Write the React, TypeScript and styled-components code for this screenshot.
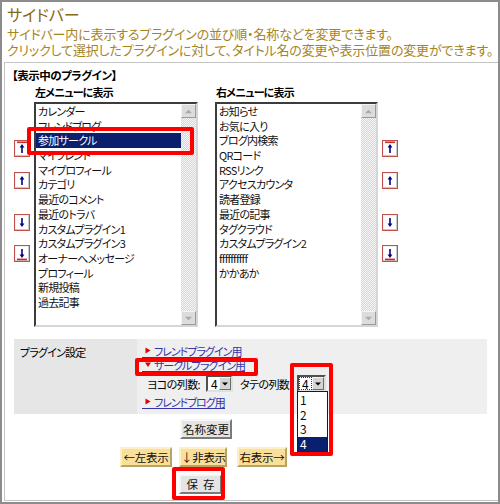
import styled, { createGlobalStyle } from 'styled-components';

const GlobalStyle = createGlobalStyle`
  html, body {
    margin: 0;
    padding: 0;
    background: #fff;
  }
  body {
    font-family: "Noto Sans CJK JP", "Noto Sans", sans-serif;
    font-feature-settings: "palt";
    color: #000;
  }
`;

type Pos = { $x: number; $y: number; $w: number; $h: number };

const Frame = styled.div`
  position: relative;
  width: 500px;
  height: 504px;
  box-sizing: border-box;
  border: 2px solid #8c8c8c;
  padding: 0 0 1px 2px;
  display: flex;
  flex-direction: column;
  overflow: hidden;
`;

const Title = styled.h1`
  margin: 1px 0 0;
  padding-left: 3px;
  font-size: 16px;
  font-weight: normal;
  line-height: 23px;
  color: #866914;
`;

const Description = styled.p`
  margin: 0;
  padding-left: 3px;
  font-size: 13px;
  line-height: 16px;
  letter-spacing: -0.15px;
  color: #a6841e;
  white-space: nowrap;
`;

const Panel = styled.div`
  flex: 1;
  margin-top: 4px;
  border: 1px solid #c4c4c4;
  border-right: none;
  padding: 5px 0 0 7px;
`;

const Heading = styled.div`
  font-size: 11.5px;
  font-weight: bold;
  line-height: 14px;
  letter-spacing: -0.5px;
`;

const ListsRow = styled.div`
  display: flex;
  padding-left: 2px;
`;

const ArrowCol = styled.div<{ $ml: number }>`
  display: flex;
  flex-direction: column;
  width: 16px;
  padding-top: 58px;
  margin-left: ${p => p.$ml}px;
`;

const ArrowBox = styled.span<{ $mt: number }>`
  display: block;
  width: 16px;
  height: 17px;
  box-sizing: border-box;
  margin-top: ${p => p.$mt}px;
  border: 1px solid #c0504d;
  background: #fff;
  box-shadow: inset -1px -1px 0 #c8c8c8, inset 1px 1px 0 #f2f2f2;

  svg {
    display: block;
  }
`;

const ListColumn = styled.div<{ $ml: number; $w: number }>`
  display: flex;
  flex-direction: column;
  margin-left: ${p => p.$ml}px;
  width: ${p => p.$w}px;
`;

const ColumnLabel = styled.div`
  margin-top: 2px;
  padding-left: 1px;
  font-size: 11px;
  font-weight: bold;
  line-height: 16px;
  letter-spacing: -0.8px;
`;

const ListBox = styled.div`
  margin-top: 2px;
  height: 225px;
  box-sizing: border-box;
  border: 2px solid;
  border-color: #3c3c3c #d6d6d6 #d6d6d6 #3c3c3c;
  background: #fff;
  display: flex;
`;

const Items = styled.div`
  flex: 1;
  min-width: 0;
`;

const Item = styled.div<{ $selected?: boolean }>`
  height: 14.7px;
  line-height: 14.7px;
  padding-left: 2px;
  font-size: 11px;
  letter-spacing: -0.75px;
  white-space: nowrap;
  background: ${p => (p.$selected ? '#0a1f6e' : 'transparent')};
  color: ${p => (p.$selected ? '#fff' : '#111')};
`;

const ScrollBar = styled.div`
  width: 15px;
  display: flex;
  flex-direction: column;
  justify-content: space-between;
  background: repeating-conic-gradient(#f6f6f6 0 25%, #d6d6d6 0 50%) 0 0 / 2px 2px;
`;

const ScrollBtn = styled.div`
  height: 14px;
  box-sizing: border-box;
  background: #dcdcdc;
  border: 1px solid;
  border-color: #f4f4f4 #9a9a9a #9a9a9a #f4f4f4;
  display: flex;
  align-items: center;
  justify-content: center;
`;

const Settings = styled.div`
  display: flex;
  margin: 12px 11px 0 2px;
`;

const SettingsLabel = styled.div`
  width: 123px;
  box-sizing: border-box;
  padding: 6px 6px;
  background: #e6e6e6;
  font-size: 11px;
  letter-spacing: -0.8px;
  line-height: 14px;
`;

const SettingsBody = styled.div`
  flex: 1;
  background: #efefef;
  padding: 5px 0 5px 5px;
`;

const LinkLine = styled.div<{ $mt?: number }>`
  height: 14px;
  margin-top: ${p => p.$mt ?? 0}px;
  display: flex;
  align-items: center;
`;

const Link = styled.a`
  display: inline-flex;
  align-items: center;
  gap: 3px;
  padding-left: 3px;
  height: 12px;
  border-bottom: 1px solid #3333aa;
  font-size: 11px;
  letter-spacing: -1px;
  line-height: 12px;
  color: #3333aa;
  text-decoration: none;
  cursor: pointer;
`;

const SelectRow = styled.div`
  display: flex;
  align-items: center;
  margin-top: 3px;
  height: 17px;
  padding-left: 5px;
  font-size: 11px;
  letter-spacing: -0.6px;
`;

const FieldLabel = styled.span<{ $w: number; $pl?: number }>`
  width: ${p => p.$w}px;
  padding-left: ${p => p.$pl ?? 0}px;
  white-space: nowrap;
`;

const Select = styled.div<{ $w: number }>`
  position: relative;
  width: ${p => p.$w}px;
  height: 17px;
  box-sizing: border-box;
  border: 2px solid;
  border-color: #505050 #e0e0e0 #e0e0e0 #505050;
  background: #fff;
  display: flex;
`;

const SelectValue = styled.div<{ $focus?: boolean }>`
  flex: 1;
  margin: 1px;
  padding-left: 2px;
  font-size: 12px;
  line-height: 11px;
  letter-spacing: 0;
  outline: ${p => (p.$focus ? '1px dotted #333' : 'none')};
`;

const SelectArrow = styled.div`
  width: 12px;
  box-sizing: border-box;
  background: #d4d4d4;
  border: 1px solid;
  border-color: #f4f4f4 #6c6c6c #6c6c6c #f4f4f4;
  display: flex;
  align-items: center;
  justify-content: center;
`;

const DropList = styled.div`
  position: absolute;
  top: 14px;
  left: -2px;
  width: 31px;
  height: 62px;
  box-sizing: border-box;
  border: 1px solid #1a1a1a;
  background: #fff;
  padding-top: 1px;
  z-index: 2;
`;

const Option = styled.div<{ $selected?: boolean }>`
  height: 14.7px;
  line-height: 14.7px;
  padding-left: 2px;
  font-size: 12px;
  letter-spacing: 0;
  background: ${p => (p.$selected ? '#0a1f6e' : 'transparent')};
  color: ${p => (p.$selected ? '#fff' : '#111')};
`;

const ButtonArea = styled.div`
  width: 384px;
  margin-left: 2px;
  display: flex;
  flex-direction: column;
  align-items: center;
`;

const ButtonRow = styled.div`
  display: flex;
  margin: 8px 5px 0 0;
`;

const GrayButton = styled.button<{ $w: number; $mt?: number; $mr?: number }>`
  width: ${p => p.$w}px;
  height: 20px;
  margin-top: ${p => p.$mt ?? 0}px;
  margin-right: ${p => p.$mr ?? 0}px;
  padding: 0;
  box-sizing: border-box;
  border: 2px solid;
  border-color: #f6f6f6 #7a7a7a #7a7a7a #f6f6f6;
  background: #e4e4e4;
  font-family: inherit;
  font-feature-settings: "palt";
  font-size: 11.5px;
  line-height: 14px;
  color: #111;
  white-space: nowrap;
`;

const YellowButton = styled.button<{ $w: number; $ml: number }>`
  width: ${p => p.$w}px;
  height: 20px;
  margin-left: ${p => p.$ml}px;
  padding: 0;
  box-sizing: border-box;
  border: 2px solid;
  border-color: #fdf0c4 #b8a264 #b8a264 #fdf0c4;
  background: #f9df9a;
  font-family: inherit;
  font-feature-settings: "palt";
  font-size: 11.5px;
  letter-spacing: -0.3px;
  line-height: 14px;
  color: #111;
  white-space: nowrap;
`;

const RedMark = styled.div<Pos>`
  position: absolute;
  left: ${p => p.$x - 2}px;
  top: ${p => p.$y - 2}px;
  width: ${p => p.$w}px;
  height: ${p => p.$h}px;
  box-sizing: border-box;
  border: 4px solid #f00;
  border-radius: 2px;
  pointer-events: none;
  z-index: 3;
`;

type ArrowKind = 'top' | 'up' | 'down' | 'bottom';

const ArrowIcon = ({ kind }: { kind: ArrowKind }) => {
  const up = kind === 'top' || kind === 'up';
  return (
    <svg width="14" height="15" viewBox="0 0 14 15">
      {kind === 'top' && <rect x="2" y="0.5" width="10" height="1.6" fill="#c0302c" />}
      {up ? (
        <>
          <line x1="7" y1="5" x2="7" y2="12" stroke="#000080" strokeWidth="1.6" />
          <polygon points="4.6,6.4 7,3 9.4,6.4" fill="#000080" />
        </>
      ) : (
        <>
          <line x1="7" y1="3" x2="7" y2="10" stroke="#000080" strokeWidth="1.6" />
          <polygon points="4.6,8.6 7,12 9.4,8.6" fill="#000080" />
        </>
      )}
      {kind === 'bottom' && <rect x="2" y="12.6" width="10" height="1.6" fill="#e02020" />}
    </svg>
  );
};

const Arrows = ({ ml }: { ml: number }) => (
  <ArrowCol $ml={ml}>
    <ArrowBox $mt={0}><ArrowIcon kind="top" /></ArrowBox>
    <ArrowBox $mt={15}><ArrowIcon kind="up" /></ArrowBox>
    <ArrowBox $mt={25}><ArrowIcon kind="down" /></ArrowBox>
    <ArrowBox $mt={14}><ArrowIcon kind="bottom" /></ArrowBox>
  </ArrowCol>
);

const Tri = ({ dir, color = '#aaa', size = 7 }: { dir: 'up' | 'down'; color?: string; size?: number }) => (
  <svg width={size} height={Math.ceil(size / 2) + 1} viewBox="0 0 8 5">
    {dir === 'up' ? (
      <polygon points="0,4.5 4,0.5 8,4.5" fill={color} />
    ) : (
      <polygon points="0,0.5 4,4.5 8,0.5" fill={color} />
    )}
  </svg>
);

const LinkMark = ({ open }: { open?: boolean }) => (
  <svg width="6" height="7" viewBox="0 0 6 7">
    {open ? (
      <polygon points="0,1.5 6,1.5 3,6" fill="#e00000" />
    ) : (
      <polygon points="0.5,0.5 5.5,3.5 0.5,6.5" fill="#e00000" />
    )}
  </svg>
);

const leftItems = [
  'カレンダー',
  'フレンドブログ',
  '参加サークル',
  'マイフレンド',
  'マイプロフィール',
  'カテゴリ',
  '最近のコメント',
  '最近のトラバ',
  'カスタムプラグイン1',
  'カスタムプラグイン3',
  'オーナーへメッセージ',
  'プロフィール',
  '新規投稿',
  '過去記事',
];

const rightItems = [
  'お知らせ',
  'お気に入り',
  'ブログ内検索',
  'QRコード',
  'RSSリンク',
  'アクセスカウンタ',
  '読者登録',
  '最近の記事',
  'タグクラウド',
  'カスタムプラグイン2',
  'ffffffffff',
  'かかあか',
];

const PluginList = ({ items, selected }: { items: string[]; selected?: number }) => (
  <ListBox>
    <Items>
      {items.map((name, i) => (
        <Item key={name} $selected={i === selected}>{name}</Item>
      ))}
    </Items>
    <ScrollBar>
      <ScrollBtn><Tri dir="up" /></ScrollBtn>
      <ScrollBtn><Tri dir="down" /></ScrollBtn>
    </ScrollBar>
  </ListBox>
);

const App = () => {
  return (
    <>
      <GlobalStyle />
      <Frame>
        <Title>サイドバー</Title>
        <Description>
          サイドバー内に表示するプラグインの並び順・名称などを変更できます。
          <br />
          クリックして選択したプラグインに対して、タイトル名の変更や表示位置の変更ができます。
        </Description>
        <Panel>
          <Heading>【表示中のプラグイン】</Heading>
          <ListsRow>
            <Arrows ml={0} />
            <ListColumn $ml={4} $w={164}>
              <ColumnLabel>左メニューに表示</ColumnLabel>
              <PluginList items={leftItems} selected={2} />
            </ListColumn>
            <ListColumn $ml={17} $w={163}>
              <ColumnLabel>右メニューに表示</ColumnLabel>
              <PluginList items={rightItems} />
            </ListColumn>
            <Arrows ml={4} />
          </ListsRow>
          <Settings>
            <SettingsLabel>プラグイン設定</SettingsLabel>
            <SettingsBody>
              <LinkLine>
                <Link><LinkMark />フレンドプラグイン用</Link>
              </LinkLine>
              <LinkLine>
                <Link><LinkMark open />サークルプラグイン用</Link>
              </LinkLine>
              <SelectRow>
                <FieldLabel $w={59}>ヨコの列数:</FieldLabel>
                <Select $w={27}>
                  <SelectValue>4</SelectValue>
                  <SelectArrow><Tri dir="down" color="#000" size={6} /></SelectArrow>
                </Select>
                <FieldLabel $w={57} $pl={7}>タテの列数:</FieldLabel>
                <Select $w={29}>
                  <SelectValue $focus>4</SelectValue>
                  <SelectArrow><Tri dir="down" color="#000" size={6} /></SelectArrow>
                  <DropList>
                    <Option>1</Option>
                    <Option>2</Option>
                    <Option>3</Option>
                    <Option $selected>4</Option>
                  </DropList>
                </Select>
              </SelectRow>
              <LinkLine $mt={3}>
                <Link><LinkMark />フレンドブログ用</Link>
              </LinkLine>
            </SettingsBody>
          </Settings>
          <ButtonArea>
            <GrayButton $w={52} $mt={5}>名称変更</GrayButton>
            <ButtonRow>
              <YellowButton $w={52} $ml={0}>←左表示</YellowButton>
              <YellowButton $w={48} $ml={7}>↓非表示</YellowButton>
              <YellowButton $w={50} $ml={10}>右表示→</YellowButton>
            </ButtonRow>
            <GrayButton $w={43} $mt={7} $mr={11}>保&nbsp;&nbsp;存</GrayButton>
          </ButtonArea>
        </Panel>
        <RedMark $x={27} $y={127} $w={167} $h={28} />
        <RedMark $x={135} $y={358} $w={123} $h={18} />
        <RedMark $x={290} $y={363} $w={43} $h={93} />
        <RedMark $x={172} $y={467} $w={53} $h={33} />
      </Frame>
    </>
  );
};

export default App;
